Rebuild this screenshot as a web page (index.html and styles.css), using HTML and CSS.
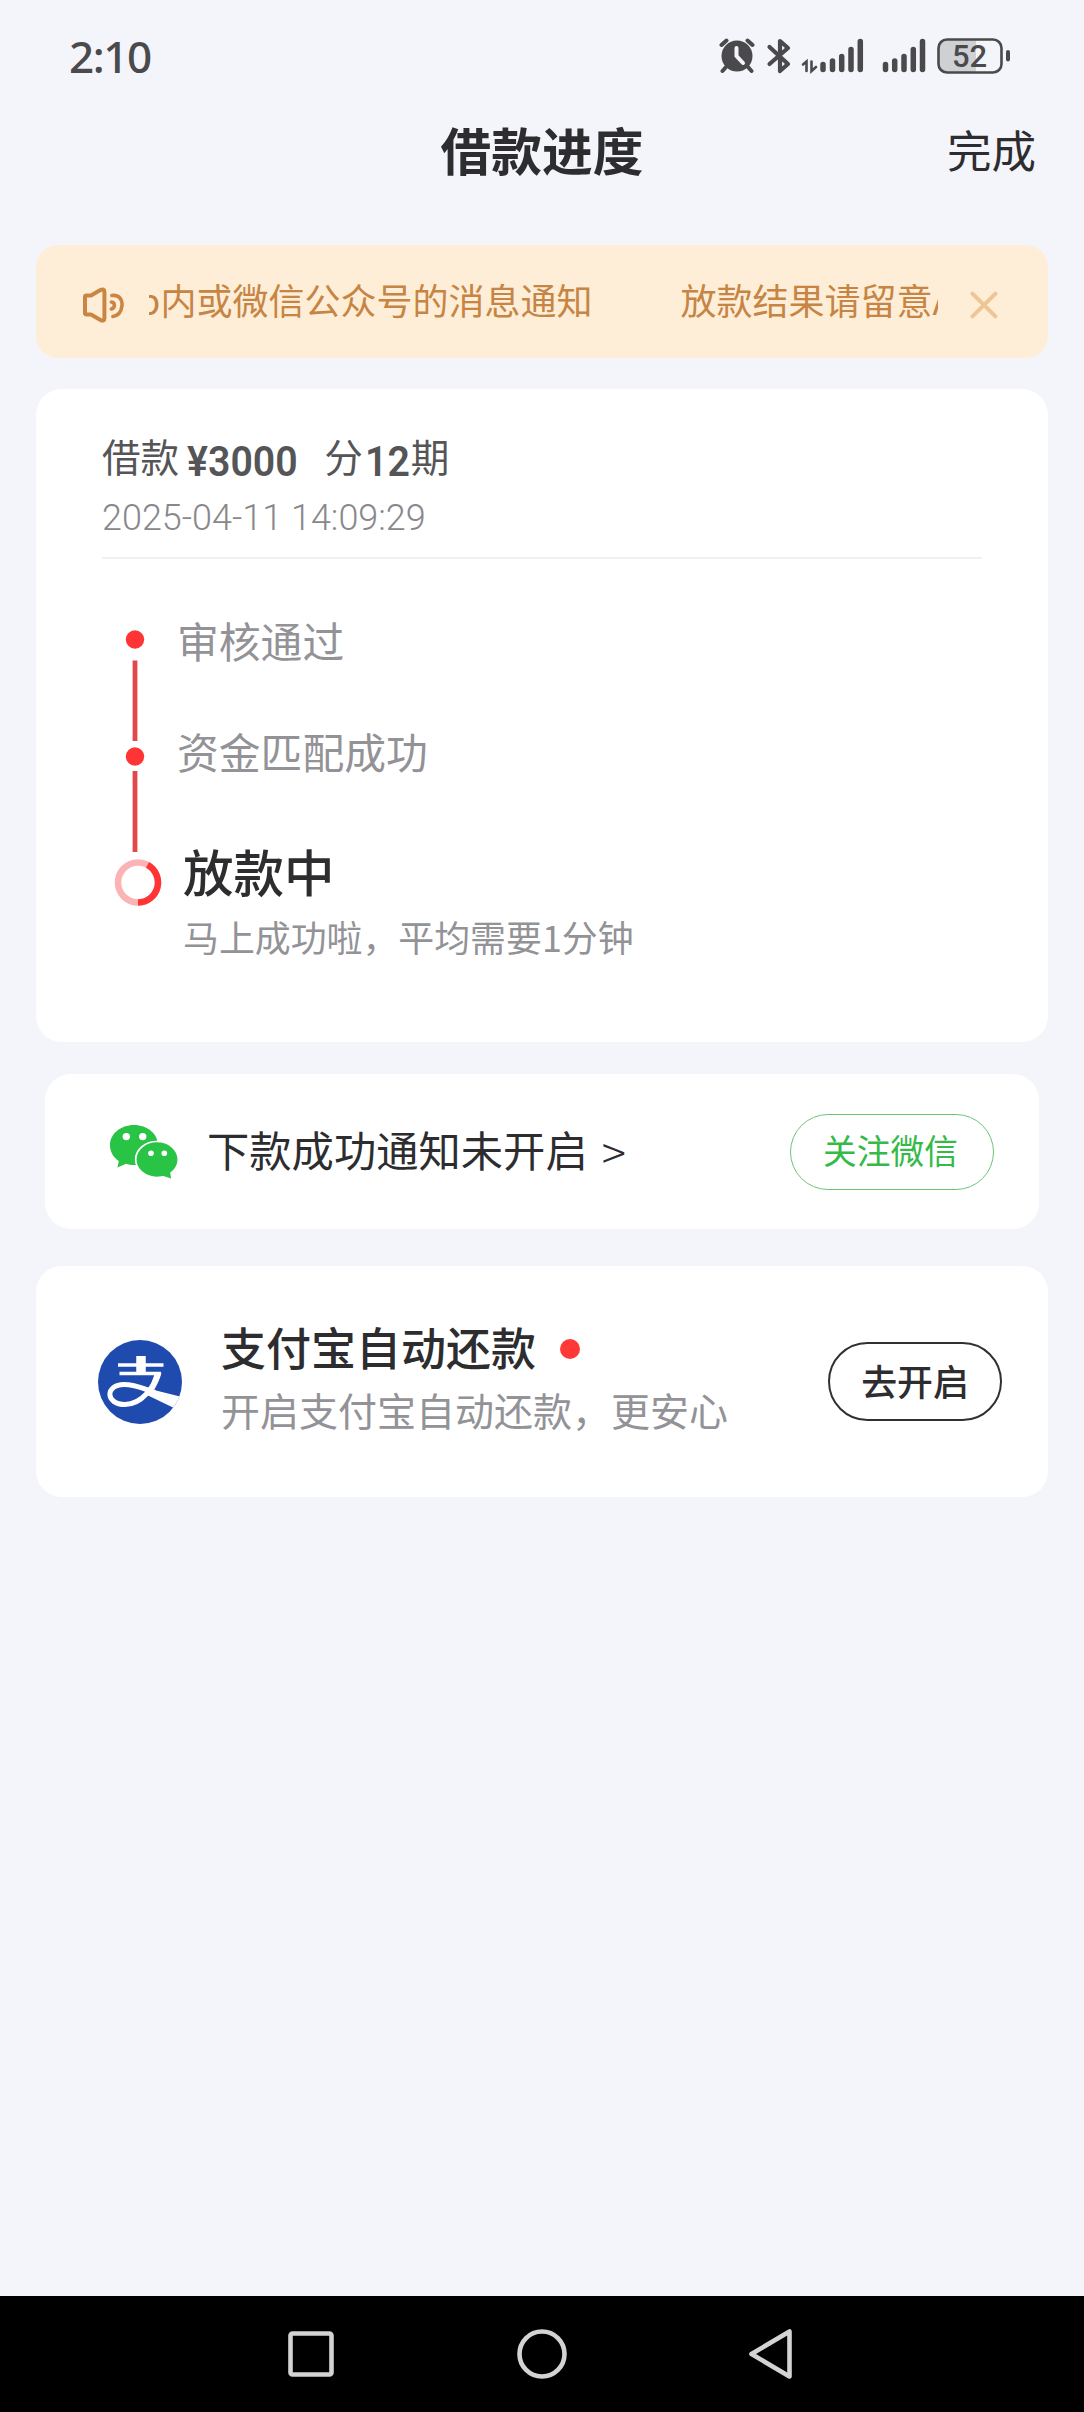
FILE: index.html
```html
<!DOCTYPE html>
<html lang="zh-CN">
<head>
<meta charset="utf-8">
<title>借款进度</title>
<link rel="stylesheet" href="styles.css">
</head>
<body>
<div class="screen">
  <header class="status">
    <span class="time">2:10</span>
    <svg class="status-icons" width="292" height="36" viewBox="0 0 292 36" fill="none" stroke="#4a4a4c" stroke-linecap="round">
      <circle cx="18" cy="18" r="15.5" fill="#4a4a4c" stroke="none"/>
      <path d="M2.500 7l5-4.500M33.500 7l-5-4.500M7 29l-3.500 4M29 29l3.500 4" stroke-width="4"/>
      <path d="M17.500 10v8l6.500 7" stroke="#f4f5fa" stroke-width="4"/>
      <path d="M50.500 9l18.500 17-8 7V3l8 7-18.500 16" stroke-width="4.200" stroke-linejoin="round"/>
      <path d="M87.500 33V23.500l-3.500 3M92.500 23.500V33l4.500-4" stroke-width="2.600"/>
      <path d="M104 31.500v-5M113.500 31.500v-8.500M122.700 31.500v-13M132 31.500v-20M141.300 31.500V3.500M166.500 31.500v-5M175.700 31.500v-8.500M185 31.500v-13M194.300 31.500v-20M203.500 31.500V3.500" stroke-width="5.500"/>
      <path d="M226 1h31v34h-31a7 7 0 0 1-7-7V8a7 7 0 0 1 7-7z" fill="#cfd0d3" stroke="none"/>
      <rect x="219.500" y="1.500" width="63" height="33" rx="8.500" stroke-width="2.600"/>
      <path d="M289 14v7.500" stroke-width="4"/>
      <text class="battery" x="250.500" y="28.500" text-anchor="middle">52</text>
    </svg>
  </header>

  <nav class="titlebar">
    <span></span>
    <h1>借款进度</h1>
    <a class="done">完成</a>
  </nav>

  <section class="notice">
    <svg class="speaker" width="42" height="36" viewBox="0 0 42 36" fill="none" stroke="#cb8541" stroke-width="4" stroke-linecap="round" stroke-linejoin="round">
      <path d="M3 10q0-1.500 1.500-1.500H9L18.500 3Q22.500 1 22.500 5v26q0 4-4 2L9 27.500H4.500Q3 27.500 3 26z"/>
      <path d="M30 8.500c8-1 11 5 10 11-1 7-5 9.500-9 10M29.500 15c4 .5 4 6 0 7" stroke-width="3.600"/>
    </svg>
    <div class="marquee"><div class="track"><span>放款结果请留意App内或微信公众号的消息通知</span><span>放款结果请留意App内</span></div></div>
    <svg class="close" width="28" height="28" viewBox="0 0 28 28" stroke="#efc596" stroke-width="4" stroke-linecap="round"><path d="M2.500 2.500l23 23M25.500 2.500l-23 23"/></svg>
  </section>

  <main class="card progress">
    <div class="loan"><span>借款</span><b class="amount">¥3000</b><span class="split">分</span><b class="months">12</b><span>期</span></div>
    <div class="date"><span>2025-04-11 14:09:29</span></div>
    <div class="timeline">
      <svg class="rail" width="48" height="290" viewBox="0 0 48 290">
        <circle cx="21" cy="20.500" r="9.200" fill="#ff3535"/>
        <path d="M21 41.500v80.500M21 152v81" stroke="#e0484c" stroke-width="4.800"/>
        <circle cx="21" cy="137.500" r="9.200" fill="#ff3535"/>
        <circle cx="24" cy="263.500" r="20" fill="none" stroke="#fcb3b5" stroke-width="6.500"/>
        <path d="M33.500 245.900A20 20 0 0 1 24 283.500" fill="none" stroke="#ff3535" stroke-width="6.500"/>
      </svg>
      <div class="steps">
        <p class="step">审核通过</p>
        <p class="step second">资金匹配成功</p>
        <p class="current">放款中</p>
        <p class="hint">马上成功啦，平均需要1分钟</p>
      </div>
    </div>
  </main>

  <section class="card wechat">
    <svg class="wechat-icon" width="70" height="56" viewBox="0 0 70 56">
      <path d="M25 1C11.500 1 1 10 1 21c0 6.500 3 12 8.800 16L8.500 43.500l8.500-3.800c2.500.8 5 1.300 8 1.300 13.500 0 24-9 24-20S38.500 1 25 1z" fill="#29c445"/>
      <ellipse cx="48" cy="35.500" rx="21.300" ry="18" fill="#29c445" stroke="#fff" stroke-width="1.700"/>
      <path d="M53 51.500l9 3-1-7.500z" fill="#29c445"/>
      <g fill="#fff"><circle cx="17.300" cy="12.600" r="3.700"/><circle cx="33.700" cy="12.600" r="3.700"/><circle cx="42" cy="29.300" r="2.800"/><circle cx="55.300" cy="29.300" r="2.800"/></g>
    </svg>
    <span class="wechat-text">下款成功通知未开启</span><span class="arrow">&gt;</span>
    <a class="pill green"><span>关注微信</span></a>
  </section>

  <section class="card alipay">
    <svg class="alipay-icon" width="84" height="84" viewBox="0 0 84 84">
      <defs><clipPath id="disc"><circle cx="42" cy="42" r="42"/></clipPath></defs>
      <g clip-path="url(#disc)">
        <rect width="84" height="84" fill="#1f4aae"/>
        <g fill="none" stroke="#fff">
          <path d="M20 25h45.500M21.500 33.500h41.500" stroke-width="3.600"/>
          <path d="M43 16v18" stroke-width="9.500"/>
          <path d="M60 33.500C56 47 44 64.500 27 64.500 7 64.500 7 44.500 26 44.500c12 0 20 4.500 31 8" stroke-width="5"/>
        </g>
        <path d="M57 33h6.500c-2 7-4.500 12-7.500 17l28 7-8 11-27-13z" fill="#fff"/>
      </g>
    </svg>
    <div class="alipay-copy">
      <h2>支付宝自动还款<i class="dot"></i></h2>
      <p>开启支付宝自动还款，更安心</p>
    </div>
    <a class="pill dark"><span>去开启</span></a>
  </section>

  <footer class="navbar">
    <svg width="1084" height="116" viewBox="0 0 1084 116" fill="none" stroke="#d3d3d3" stroke-width="4.600" stroke-linejoin="round">
      <rect x="290.500" y="37.500" width="41" height="41" rx="2"/>
      <circle cx="542" cy="58" r="22.500"/>
      <path d="M751.500 58L789.500 35.500v45z"/>
    </svg>
  </footer>
</div>
</body>
</html>
```

FILE: styles.css
```css
* { box-sizing: border-box; margin: 0; padding: 0; }
body { background: #f4f5fa; font-family: "Noto Sans CJK SC", sans-serif; color: #2d2d30; }
.screen { width: 1084px; height: 2412px; display: flex; flex-direction: column; white-space: nowrap; overflow: hidden; }

.status { height: 112px; padding: 38px 73px 0 69px; display: flex; justify-content: space-between; align-items: flex-start; }
.time { font: 500 44px/44px "Noto Sans", sans-serif; color: #4a4a4c; margin-top: -4px; letter-spacing: -1.4px; }
.battery { font: 500 31px Roboto, sans-serif; fill: #4a4a4c; stroke: none; }

.titlebar { height: 80px; padding: 0 48px 6px; display: grid; grid-template-columns: 1fr auto 1fr; align-items: center; }
.titlebar h1 { font-size: 50.7px; font-weight: 700; line-height: 74px; }
.done { font-size: 44.5px; line-height: 74px; justify-self: end; }

.notice { margin: 53px 36px 0; height: 113px; border-radius: 22px; background: #feeed7; display: flex; align-items: center; padding: 0 50px 0 46px; color: #c68544; }
.speaker { margin-top: 7px; }
.marquee { width: 792px; margin-left: 25px; overflow: hidden; }
.track { display: flex; gap: 88px; font-size: 36px; line-height: 54px; margin: 0 0 6px -307px; }
.track span { flex: none; }
.close { margin: 6px 0 0 32px; }

.card { background: #fff; border-radius: 26px; margin: 0 36px; }
.progress { margin-top: 31px; height: 653px; padding: 39px 66px 0; }
.loan { display: flex; align-items: baseline; height: 68px; font-size: 38.6px; line-height: 54px; color: #555558; }
.loan b { font: 600 42px/54px Roboto, sans-serif; transform-origin: left; transform: translateY(4px) scaleX(.935); }
.amount { width: 114px; margin-left: 8px; }
.split { margin-left: 23px; }
.months { width: 46px; margin-left: 2px; }
.date { height: 63px; border-bottom: 2px solid #f1f1f2; font: 350 37px/44px Roboto, sans-serif; color: #88888c; }
.date span { display: inline-block; transform: scaleX(.972); transform-origin: left; }
.timeline { display: flex; margin-top: 60px; }
.rail { margin-left: 12px; flex: none; }
.steps { margin-left: 15px; }
.step { font-size: 41.8px; line-height: 60px; margin: -9px 0 0 0; color: #929297; }
.second { margin-top: 51px; }
.current { font-size: 50.5px; font-weight: 500; line-height: 72px; margin: 53px 0 0 6px; color: #2d2d2f; }
.hint { font-size: 35.9px; line-height: 52px; margin: 4px 0 0 6px; color: #929297; }

.wechat { margin: 32px 45px 0; height: 155px; display: flex; align-items: center; padding: 0 45px 0 64px; }
.wechat-text { font-size: 42.3px; margin: 0 0 6px 28px; }
.arrow { font-size: 45px; font-weight: 300; margin: 0 0 3px 14px; }
.pill { margin-left: auto; border-radius: 40px; display: flex; align-items: center; justify-content: center; }
.pill span { padding-bottom: 4px; }
.green { width: 204px; height: 76px; border: 1.5px solid #6cc47c; color: #35ba49; font-size: 33.7px; }
.green span { padding-right: 3px; }
.alipay { margin-top: 37px; height: 231px; display: flex; align-items: center; padding: 0 46px 0 62px; }
.alipay-icon { flex: none; }
.alipay-copy { margin: 0 0 10px 39px; }
.alipay h2 { font-size: 45px; font-weight: 500; line-height: 64px; display: flex; align-items: center; gap: 24px; }
.dot { width: 20px; height: 20px; border-radius: 50%; background: #ff3838; margin-top: 5px; }
.alipay p { font-size: 39px; line-height: 60px; color: #929297; }
.dark { width: 174px; height: 79px; border: 2px solid #303033; font-size: 35.9px; font-weight: 500; }

.navbar { margin-top: auto; height: 116px; background: #000; }
.navbar svg { display: block; }
```
